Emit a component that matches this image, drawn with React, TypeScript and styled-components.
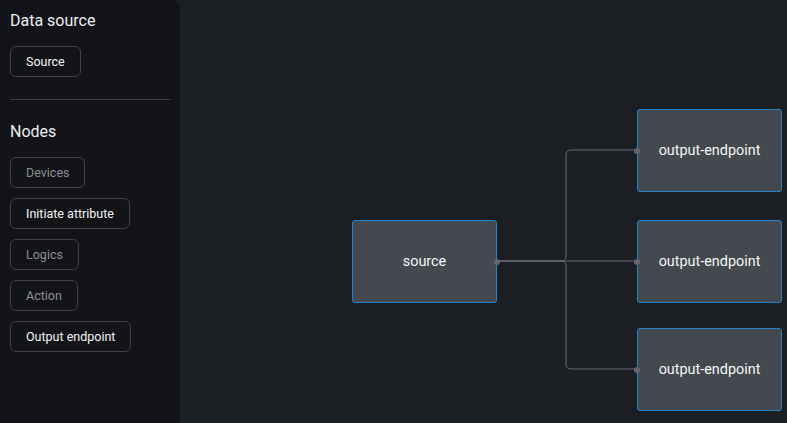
import { createGlobalStyle, styled } from "styled-components";

const GlobalStyle = createGlobalStyle`
  html, body {
    margin: 0;
    padding: 0;
    height: 100%;
    background: #1b1e22;
    font-family: Roboto, "Liberation Sans", Arial, sans-serif;
  }
  #root {
    height: 100%;
  }
`;

const Layout = styled.main`
  display: flex;
  height: 423px;
  background: #1b1e22;
`;

const Sidebar = styled.aside`
  width: 180px;
  flex-shrink: 0;
  box-sizing: border-box;
  padding: 12px 9px 0 10px;
  background: #121418;
  border-top-right-radius: 7px;
  display: flex;
  flex-direction: column;
`;

const Heading = styled.h3`
  margin: 0 0 16px;
  font-size: 16px;
  font-weight: 400;
  color: #eceef0;
  line-height: 18px;
`;

const Divider = styled.hr`
  border: none;
  border-top: 1px solid #3b3e43;
  margin: 22px 0 23px;
  width: 161px;
`;

const ButtonList = styled.div`
  display: flex;
  flex-direction: column;
  align-items: flex-start;
  gap: 10px;
`;

const NodeButton = styled.button<{ $muted?: boolean }>`
  height: 31px;
  padding: 0 15px;
  box-sizing: border-box;
  background: transparent;
  border: 1px solid #3f4248;
  border-radius: 6px;
  font-family: inherit;
  font-size: 12.5px;
  color: ${(p) => (p.$muted ? "#8a8f97" : "#f2f3f5")};
  cursor: pointer;
`;

const Canvas = styled.section`
  position: relative;
  flex: 1;
  overflow: hidden;
`;

const Edges = styled.svg`
  position: absolute;
  left: 0;
  top: 0;
  width: 100%;
  height: 100%;
`;

const FlowNode = styled.div`
  position: absolute;
  width: 145px;
  height: 83px;
  box-sizing: border-box;
  background: #44484f;
  border: 1px solid #1e86d0;
  border-radius: 3px;
  display: flex;
  align-items: center;
  justify-content: center;
  font-size: 14.4px;
  color: #f4f5f7;
`;

const Handle = styled.span<{ $side: "left" | "right" }>`
  position: absolute;
  top: 50%;
  ${(p) => p.$side}: -4px;
  width: 6px;
  height: 6px;
  margin-top: -3px;
  border-radius: 50%;
  background: #62666d;
`;

const targets = [
  { x: 457, y: 109 },
  { x: 457, y: 220 },
  { x: 457, y: 328 },
];

function edgePath(sx: number, sy: number, tx: number, ty: number) {
  const mx = 386;
  if (Math.abs(ty - sy) < 1) return `M${sx} ${sy} L${tx} ${ty}`;
  const dir = ty < sy ? -1 : 1;
  const r = 5;
  return `M${sx} ${sy} L${mx - r} ${sy} Q${mx} ${sy} ${mx} ${sy + dir * r} L${mx} ${ty - dir * r} Q${mx} ${ty} ${mx + r} ${ty} L${tx} ${ty}`;
}

export default function App() {
  const source = { x: 172, y: 220 };
  const sx = source.x + 145;
  const sy = source.y + 41;

  return (
    <Layout>
      <GlobalStyle />
      <Sidebar>
        <Heading>Data source</Heading>
        <ButtonList>
          <NodeButton>Source</NodeButton>
        </ButtonList>
        <Divider />
        <Heading>Nodes</Heading>
        <ButtonList>
          <NodeButton $muted>Devices</NodeButton>
          <NodeButton>Initiate attribute</NodeButton>
          <NodeButton $muted>Logics</NodeButton>
          <NodeButton $muted>Action</NodeButton>
          <NodeButton>Output endpoint</NodeButton>
        </ButtonList>
      </Sidebar>

      <Canvas>
        <Edges>
          {targets.map((t, i) => (
            <path
              key={i}
              d={edgePath(sx, sy, t.x - 1, t.y + 41)}
              fill="none"
              stroke="#676b72"
              strokeWidth={1}
            />
          ))}
        </Edges>

        <FlowNode style={{ left: source.x, top: source.y }}>
          source
          <Handle $side="right" />
        </FlowNode>

        {targets.map((t, i) => (
          <FlowNode key={i} style={{ left: t.x, top: t.y }}>
            output-endpoint
            <Handle $side="left" />
          </FlowNode>
        ))}
      </Canvas>
    </Layout>
  );
}
